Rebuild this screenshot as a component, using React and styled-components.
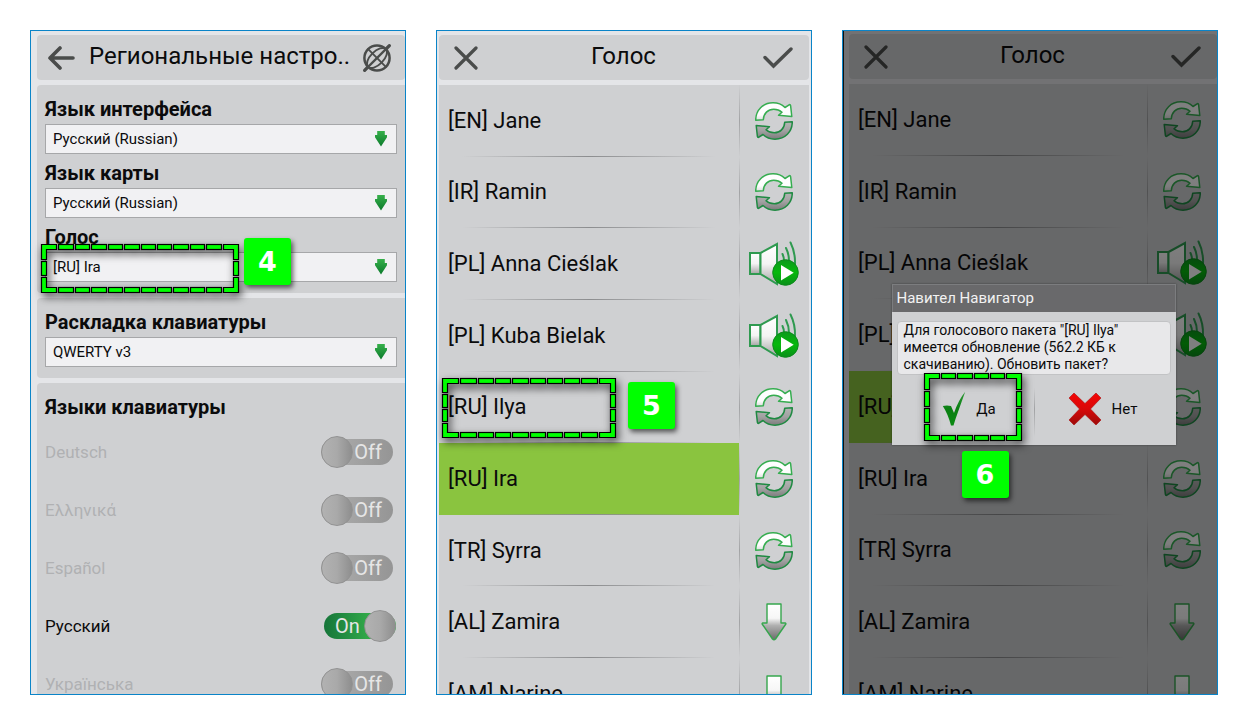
import { useState } from "react";
import styled, { createGlobalStyle, css } from "styled-components";

const idiomas = ["Deutsch", "Ελληνικά", "Español", "Русский", "Українська"];

const voces = [
  { nombre: "[EN] Jane", accion: "actualizar" },
  { nombre: "[IR] Ramin", accion: "actualizar" },
  { nombre: "[PL] Anna Cieślak", accion: "escuchar" },
  { nombre: "[PL] Kuba Bielak", accion: "escuchar" },
  { nombre: "[RU] Ilya", accion: "actualizar" },
  { nombre: "[RU] Ira", accion: "actualizar" },
  { nombre: "[TR] Syrra", accion: "actualizar" },
  { nombre: "[AL] Zamira", accion: "descargar" },
  { nombre: "[AM] Narine", accion: "descargar" },
];

/*ICONOS.............................................................*/
const IconoAtras = () => (
  <svg width="28" height="24" viewBox="0 0 28 24" fill="none" stroke="#4a4c4b" strokeWidth="3.6" strokeLinecap="round" strokeLinejoin="round">
    <path d="M26 12H3M13 2 3 12l10 10" />
  </svg>
);

const IconoGlobo = () => (
  <svg width="30" height="30" viewBox="0 0 30 30" fill="none" stroke="#4a4c4b" strokeLinecap="round">
    <circle cx="15" cy="15" r="12.600" strokeWidth="2.5" />
    <g transform="rotate(-45 15 15)">
      <path d="M-2.500 15H32.500" strokeWidth="2.200" />
      <path d="M-2.500 15H1M29 15H32.500" strokeWidth="3.200" />
      <ellipse cx="15" cy="15" rx="12.600" ry="6.5" strokeWidth="1.900" />
      <path d="M15 2.500V27.500" strokeWidth="1.900" />
    </g>
  </svg>
);

const IconoCerrar = () => (
  <svg width="24" height="24" viewBox="0 0 24 24" stroke="#4a4c4b" strokeWidth="3.200" strokeLinecap="round">
    <path d="M2 2 22 22M22 2 2 22" />
  </svg>
);

const IconoListo = () => (
  <svg width="30" height="22" viewBox="0 0 30 22" fill="none" stroke="#4a4c4b" strokeWidth="3.400" strokeLinecap="round">
    <path d="M2 10.500 10.500 19 28 2" />
  </svg>
);

const mediaVuelta =
  "M.7 18.200C.7 8 8 .8 18 .8c5 0 9 1.700 12 4.700l4.500-2.900q1 0 1.100 1L36.800 14.500 23.500 13.200 27 10.200C24.500 8 21.500 7.200 18.700 7.200 13 7.200 8.500 11.500 8.300 17.800z";

const IconoActualizar = () => (
  <svg width="38" height="38" viewBox="0 0 38 38" strokeWidth="1.5" strokeLinejoin="round">
    <path fill="url(#claro)" stroke="#36ad50" d={mediaVuelta} />
    <path fill="url(#oscuro)" stroke="#1f8a42" d={mediaVuelta} transform="rotate(180 19 19)" />
  </svg>
);

const IconoEscuchar = () => (
  <svg width="50" height="46" viewBox="0 0 50 46" fill="none" stroke="#2f9a50" strokeWidth="2">
    <path fill="url(#altavoz)" d="M1 12h10.500v21H1z" />
    <path fill="url(#altavoz)" d="M11.500 12 28 3v40L11.500 33z" />
    <path d="M33.500 13q1.500 3 1.500 7M37 7q3 6 3 13M41.500 1.500q5 10 4.500 22" strokeLinecap="round" />
    <circle cx="36.500" cy="31.500" r="12.800" fill="url(#reproducir)" stroke="#0d8a1c" strokeWidth="1" />
    <path d="M32 24v15.500L44.700 31.700z" fill="#fff" stroke="none" />
  </svg>
);

const IconoDescargar = () => (
  <svg width="26" height="38" viewBox="0 0 26 38" stroke="#36a64d" strokeWidth="1.4" strokeLinejoin="round">
    <path fill="url(#bajar)" d="M6 1h14v19h4.500q.8.500 0 1.500L14.500 36q-1.500 1.500-3 0L1.500 21.500q-.8-1 0-1.500H6z" />
  </svg>
);

const IconoFlecha = () => (
  <svg width="12" height="16" viewBox="0 0 12 16">
    <path fill="url(#verde)" d="M2.200 0h7.600v4H12v2.200L6 15.500 0 6.200V4h2.200z" />
  </svg>
);

const IconoSi = () => (
  <svg width="24" height="36" viewBox="0 0 24 36">
    <path fill="url(#tilde)" d="M.8 15Q5 13.800 9 15L12 22Q16.500 9 23.200.8 18.500 14 13.500 28L11.500 34.500H9Q6 23 .8 15z" />
  </svg>
);

const IconoNo = () => (
  <svg width="34" height="34" viewBox="0 0 34 34">
    <path fill="url(#rojo)" stroke="#a80d0d" strokeWidth=".6" d="M6 1 17 11.500 28 1l5 5-10.500 11L33 28l-5 5-11-10.500L6 33l-5-5 10.500-11L1 6z" />
  </svg>
);

const Degradado = ({ id, paradas }) => (
  <linearGradient id={id} x1="0" y1="0" x2="0" y2="1">
    {paradas.map(([posicion, color]) => (
      <stop key={posicion} offset={posicion} stopColor={color} />
    ))}
  </linearGradient>
);

const Degradados = () => (
  <Oculto aria-hidden="true">
    <defs>
      <Degradado id="claro" paradas={[[0, "#fff"], [0.7, "#fdfdfd"], [1, "#dcdcdc"]]} />
      {/* va girado media vuelta, por eso empieza por el tono oscuro */}
      <Degradado id="oscuro" paradas={[[0, "#7c7c7c"], [0.5, "#a2a2a2"], [1, "#b4b4b4"]]} />
      <Degradado id="altavoz" paradas={[[0, "#fff"], [0.5, "#f4f4f4"], [1, "#a4a4a4"]]} />
      <Degradado id="reproducir" paradas={[[0, "#0b9a1c"], [0.5, "#06b80c"], [1, "#0a8f1a"]]} />
      <Degradado id="bajar" paradas={[[0, "#fff"], [0.4, "#f6f6f6"], [0.6, "#b0b0b0"], [1, "#6c6c6c"]]} />
      <Degradado id="verde" paradas={[[0, "#36b04a"], [1, "#0c7a2c"]]} />
      <Degradado id="tilde" paradas={[[0, "#2f9a38"], [0.5, "#0a7f12"], [1, "#0a8a12"]]} />
      <Degradado id="rojo" paradas={[[0, "#f50505"], [0.5, "#d80808"], [1, "#9c0a0a"]]} />
    </defs>
  </Oculto>
);

const iconos = {
  actualizar: { titulo: "Обновить", Icono: IconoActualizar },
  escuchar: { titulo: "Прослушать", Icono: IconoEscuchar },
  descargar: { titulo: "Скачать", Icono: IconoDescargar },
};

/*MARCO: esquinas en L y guiones repartidos en cada lado..............*/
const Marco = ({ ancho, alto, x, y }) => {
  const g = 5;
  const columnas = Math.round(ancho / 16.5);
  const filas = Math.round(alto / 16.5);
  const pasoX = ancho / columnas;
  const pasoY = alto / filas;
  const bx = Math.round(pasoX - 1);
  const by = Math.round(pasoY - 1);
  const guiones = [];
  for (let i = 1; i < columnas - 1; i++) {
    const gx = Math.round(i * pasoX + 1);
    const w = Math.round((i + 1) * pasoX - 1) - gx;
    guiones.push([gx, 0, w, g], [gx, alto - g, w, g]);
  }
  for (let i = 1; i < filas - 1; i++) {
    const gy = Math.round(i * pasoY + 1);
    const h = Math.round((i + 1) * pasoY - 1) - gy;
    guiones.push([0, gy, g, h], [ancho - g, gy, g, h]);
  }
  const esquina = `M0 0H${bx}V${g}H${g}V${by}H0z`;

  return (
    <MarcoSvg $x={x} $y={y} width={ancho + 1} height={alto + 1} viewBox={`-0.5 -0.5 ${ancho + 1} ${alto + 1}`} aria-hidden="true">
      {guiones.map(([gx, gy, w, h]) => (
        <rect key={`${gx}-${gy}`} x={gx} y={gy} width={w} height={h} />
      ))}
      <path d={esquina} />
      <path d={esquina} transform={`translate(${ancho} 0) scale(-1 1)`} />
      <path d={esquina} transform={`translate(0 ${alto}) scale(1 -1)`} />
      <path d={esquina} transform={`translate(${ancho} ${alto}) scale(-1 -1)`} />
    </MarcoSvg>
  );
};

const Lista = ({ elegida, marcada }) => (
  <Voces>
    {voces.map(({ nombre, accion }) => {
      const { titulo, Icono } = iconos[accion];
      return (
        <Fila key={nombre}>
          <Voz type="button" $activa={nombre === elegida}>
            {nombre}
          </Voz>
          <Accion type="button" aria-label={titulo}>
            <Icono />
          </Accion>
          {nombre === marcada && (
            <>
              <Marco ancho={173} alto={59} x={3} y={6} />
              <Paso $x={189} $y={10}>5</Paso>
            </>
          )}
        </Fila>
      );
    })}
  </Voces>
);

const Cabecera = () => (
  <Barra $izquierda={15} $derecha={16}>
    <BotonIcono type="button" aria-label="Закрыть"><IconoCerrar /></BotonIcono>
    <Titulo $centrado>Голос</Titulo>
    <BotonIcono type="button" aria-label="Готово"><IconoListo /></BotonIcono>
  </Barra>
);

const Selector = ({ id, etiqueta, valor, children }) => (
  <Campo>
    <Etiqueta htmlFor={id}>{etiqueta}</Etiqueta>
    <Caja>
      <Desplegable id={id} defaultValue={valor}>
        <option>{valor}</option>
      </Desplegable>
      <Flecha><IconoFlecha /></Flecha>
      {children}
    </Caja>
  </Campo>
);

const App = () => {
  const [activos, setActivos] = useState({ Русский: true });

  return (
    <>
      <Global />
      <Degradados />
      <Pagina>
        {/*AJUSTES REGIONALES..................................................*/}
        <Pantalla $izquierda={6}>
          <Barra $izquierda={10} $derecha={13}>
            <BotonIcono type="button" aria-label="Назад"><IconoAtras /></BotonIcono>
            <Titulo>Региональные настро..</Titulo>
            <BotonIcono type="button" aria-label="Карта"><IconoGlobo /></BotonIcono>
          </Barra>
          <Seccion>
            <Selector id="interfaz" etiqueta="Язык интерфейса" valor="Русский (Russian)" />
            <Selector id="mapa" etiqueta="Язык карты" valor="Русский (Russian)" />
            <Selector id="voz" etiqueta="Голос" valor="[RU] Ira">
              <Marco ancho={197} alto={48} x={-4} y={-8} />
              <Paso $x={199} $y={-14}>4</Paso>
            </Selector>
          </Seccion>
          <Seccion>
            <Selector id="teclado" etiqueta="Раскладка клавиатуры" valor="QWERTY v3" />
          </Seccion>
          <Seccion>
            <Subtitulo>Языки клавиатуры</Subtitulo>
            {idiomas.map((idioma) => {
              const activo = !!activos[idioma];
              return (
                <Idioma key={idioma} $activo={activo}>
                  {idioma}
                  <Interruptor $activo={activo}>
                    <Pista $activo={activo}>{activo ? "On" : "Off"}</Pista>
                    <Perilla
                      type="checkbox"
                      checked={activo}
                      $activo={activo}
                      onChange={() => setActivos({ ...activos, [idioma]: !activo })}
                    />
                  </Interruptor>
                </Idioma>
              );
            })}
          </Seccion>
        </Pantalla>

        {/*LISTA DE VOCES......................................................*/}
        <Pantalla $izquierda={2} $derecha={2}>
          <Cabecera />
          <Lista elegida="[RU] Ira" marcada="[RU] Ilya" />
        </Pantalla>

        {/*CONFIRMACION........................................................*/}
        <Pantalla $izquierda={6} $arriba={3}>
          <Cabecera />
          <Lista elegida="[RU] Ilya" />
          <Velo>
            <Dialogo role="dialog" aria-labelledby="titulo-dialogo">
              <DialogoTitulo id="titulo-dialogo">Навител Навигатор</DialogoTitulo>
              <DialogoCuerpo>
                <Mensaje>
                  Для голосового пакета "[RU] Ilya" имеется обновление (562.2 КБ к скачиванию). Обновить пакет?
                </Mensaje>
                <Botones>
                  <BotonDialogo type="button" $sangria={8}>
                    <IconoSi />
                    Да
                    <Marco ancho={97} alto={67} x={27} y={-2} />
                    <Paso $x={65} $y={76}>6</Paso>
                  </BotonDialogo>
                  <BotonDialogo type="button">
                    <IconoNo />
                    Нет
                  </BotonDialogo>
                </Botones>
              </DialogoCuerpo>
            </Dialogo>
          </Velo>
        </Pantalla>
      </Pagina>
    </>
  );
};
export default App;

const Global = createGlobalStyle`
  * {
    box-sizing: border-box;
  }
  body {
    margin: 0;
    background: #fff;
    color: #0b0b0c;
    font-family: Roboto, "Noto Sans", sans-serif;
  }
  button,
  select {
    font-family: inherit;
    color: inherit;
  }
  button {
    border: 0;
    padding: 0;
    background: none;
    cursor: pointer;
  }
  svg {
    display: block;
    flex-shrink: 0;
  }
`;
const Oculto = styled.svg`
  position: absolute;
  width: 0;
  height: 0;
`;
const Pagina = styled.main`
  display: grid;
  grid-template-columns: repeat(3, minmax(0, 1fr));
  gap: 30px;
  height: 100vh;
  padding: 30px;
`;
const Pantalla = styled.section`
  position: relative;
  display: flex;
  flex-direction: column;
  gap: 5px;
  min-height: 0;
  overflow: hidden;
  border: 1px solid #0a84c8;
  background: #e4e5e8;
  padding: ${({ $arriba = 4 }) => $arriba}px ${({ $derecha = 0 }) => $derecha}px 0 ${({ $izquierda }) => $izquierda}px;
`;
const Barra = styled.header`
  display: flex;
  align-items: center;
  justify-content: space-between;
  gap: 12px;
  flex-shrink: 0;
  height: 45px;
  padding: 0 ${({ $derecha }) => $derecha}px 0 ${({ $izquierda }) => $izquierda}px;
  border-radius: 4px;
  background: #cfd0d2;
`;
const BotonIcono = styled.button`
  display: flex;
  align-items: center;
  flex-shrink: 0;
  width: 30px;
  height: 45px;
`;
const Titulo = styled.h1`
  flex: 1;
  min-width: 0;
  margin: 0;
  font-size: 24px;
  font-weight: 400;
  line-height: 42px;
  height: 45px;
  white-space: nowrap;
  text-align: ${({ $centrado }) => ($centrado ? "center" : "left")};
`;
const Seccion = styled.div`
  flex-shrink: 0;
  padding: 5px 8px 11px;
  border-radius: 4px 0 0 4px;
  background: #cfd0d2;
`;
const Campo = styled.div`
  padding-top: 4px;
`;
const rotulo = css`
  display: block;
  font-size: 20px;
  font-weight: 700;
  line-height: 30px;
`;
const Etiqueta = styled.label`
  ${rotulo}
`;
const Subtitulo = styled.h2`
  ${rotulo}
  margin: 4px 0 1px;
`;
const Caja = styled.div`
  position: relative;
`;
const Desplegable = styled.select`
  appearance: none;
  display: block;
  width: 100%;
  height: 30px;
  padding: 0 28px 0 7px;
  border: 1px solid #a6a7a9;
  border-radius: 0;
  background: #f1f1f3;
  font-size: 15px;
`;
const Flecha = styled.span`
  position: absolute;
  top: 7px;
  right: 10px;
  pointer-events: none;
`;
const MarcoSvg = styled.svg`
  position: absolute;
  z-index: 1;
  left: ${({ $x }) => $x}px;
  top: ${({ $y }) => $y}px;
  overflow: visible;
  fill: #00ff00;
  stroke: #000;
  stroke-width: 1.2;
  filter: drop-shadow(2px 4px 4px rgba(0, 0, 0, 0.7));
  pointer-events: none;
`;
const Paso = styled.span`
  position: absolute;
  z-index: 1;
  left: ${({ $x }) => $x}px;
  top: ${({ $y }) => $y}px;
  width: 47px;
  height: 47px;
  border-radius: 3px;
  background: #00ff00;
  box-shadow: 2px 3px 5px rgba(0, 0, 0, 0.6);
  color: #fff;
  font-family: "DejaVu Sans", sans-serif;
  font-size: 27px;
  font-weight: 700;
  line-height: 47px;
  text-align: center;
`;
const Idioma = styled.label`
  display: flex;
  align-items: center;
  justify-content: space-between;
  height: 58px;
  padding-right: 1px;
  font-size: 17px;
  color: ${({ $activo }) => ($activo ? "#0b0b0c" : "#b0b1b3")};
`;
const Interruptor = styled.span`
  position: relative;
  display: flex;
  align-items: center;
  width: 75px;
  height: 32px;
  justify-content: ${({ $activo }) => ($activo ? "flex-end" : "flex-start")};
`;
const Pista = styled.span`
  width: 72px;
  height: 26px;
  border-radius: 13px;
  background: ${({ $activo }) =>
    $activo ? "linear-gradient(90deg, #16753a, #35b04b 70%)" : "linear-gradient(90deg, #b0b0b0, #959595)"};
  color: #e6e6e6;
  font-size: 20px;
  line-height: 26px;
  text-align: ${({ $activo }) => ($activo ? "left" : "right")};
  padding: 0 11px;
`;
const Perilla = styled.input`
  appearance: none;
  position: absolute;
  top: 0;
  left: ${({ $activo }) => ($activo ? "43px" : "0")};
  width: 32px;
  height: 32px;
  margin: 0;
  border: 1px solid #929292;
  border-radius: 50%;
  background: linear-gradient(90deg, #b2b2b2, #a9a9a9 50%, #8e8e8e);
  cursor: pointer;
`;
/* se ven ocho filas y media */
const Voces = styled.ul`
  flex: 1;
  display: grid;
  grid-auto-rows: calc(100% / 8.5);
  min-height: 0;
  margin: 0;
  padding: 0;
  list-style: none;
  background: #cfd0d2;
`;
const Fila = styled.li`
  position: relative;
  display: grid;
  grid-template-columns: minmax(0, 1fr) 70px;
`;
const Voz = styled.button`
  padding: 0 9px;
  border-bottom: 1px solid;
  border-image: linear-gradient(90deg, transparent 8%, #8c8d8f 50%, transparent 92%) 1;
  background: ${({ $activa }) => ($activa ? "#8ac43f" : "none")};
  font-size: 22px;
  text-align: left;
`;
const Accion = styled.button`
  display: flex;
  align-items: center;
  justify-content: center;
  padding-right: 2px;
  border-left: 1px solid;
  border-image: linear-gradient(transparent, #a2a3a5 50%, transparent) 1;
`;
const Velo = styled.div`
  position: absolute;
  z-index: 2;
  inset: 0;
  display: flex;
  align-items: center;
  justify-content: center;
  padding: 4px 0 0 6px;
  border-left: 1px solid #111;
  background: rgba(0, 0, 0, 0.5);
`;
const Dialogo = styled.div`
  width: 284px;
  box-shadow: 0 0 2px rgba(0, 0, 0, 0.4);
`;
const DialogoTitulo = styled.h2`
  margin: 0;
  padding: 0 4px;
  border: 1px solid #7c7d7f;
  border-bottom: 0;
  background: #69696b;
  color: #f2f2f2;
  font-size: 15px;
  font-weight: 400;
  line-height: 27px;
`;
const DialogoCuerpo = styled.div`
  padding: 9px 5px 2px;
  background: #cfd0d2;
`;
const Mensaje = styled.p`
  margin: 0;
  padding: 0 6px 1px;
  border: 1px solid #c2c3c5;
  border-radius: 4px;
  background: #e8e8ea;
  font-size: 14px;
  line-height: 17px;
`;
const Botones = styled.div`
  display: grid;
  grid-template-columns: 1fr 1fr;
`;
const BotonDialogo = styled.button`
  position: relative;
  display: flex;
  align-items: center;
  justify-content: center;
  gap: 10px;
  height: 68px;
  padding-left: ${({ $sangria = 0 }) => $sangria}px;
  font-size: 15px;

  & + & {
    border-left: 1px solid;
    border-image: linear-gradient(transparent 20%, #a2a3a5 50%, transparent 90%) 1;
  }
`;
